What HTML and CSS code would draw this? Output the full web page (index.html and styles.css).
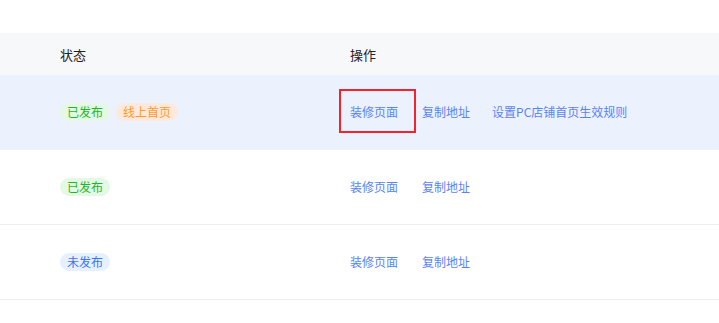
FILE: index.html
```html
<!DOCTYPE html>
<html lang="zh-CN">
<head>
<meta charset="utf-8">
<link rel="stylesheet" href="styles.css">
</head>
<body>
<div class="table">
  <div class="row head">
    <div class="cell col-status">状态</div>
    <div class="cell col-actions">操作</div>
  </div>
  <div class="row active">
    <div class="cell col-status">
      <span class="tag green">已发布</span>
      <span class="tag orange">线上首页</span>
    </div>
    <div class="cell col-actions">
      <a class="link marked">装修页面<span class="mark"></span></a>
      <a class="link">复制地址</a>
      <a class="link">设置PC店铺首页生效规则</a>
    </div>
  </div>
  <div class="row">
    <div class="cell col-status">
      <span class="tag green">已发布</span>
    </div>
    <div class="cell col-actions">
      <a class="link">装修页面</a>
      <a class="link">复制地址</a>
    </div>
  </div>
  <div class="row">
    <div class="cell col-status">
      <span class="tag blue">未发布</span>
    </div>
    <div class="cell col-actions">
      <a class="link">装修页面</a>
      <a class="link">复制地址</a>
    </div>
  </div>
</div>
</body>
</html>
```

FILE: styles.css
```css
html, body {
  margin: 0;
  padding: 0;
  background: #ffffff;
}
body {
  font-family: "Noto Sans CJK SC", "Noto Sans", sans-serif;
  color: #1f2329;
}
.table {
  padding-top: 33px;
}
.row {
  display: grid;
  grid-template-columns: 350px 1fr;
  align-items: center;
  height: 74px;
  border-bottom: 1px solid #eceef1;
}
.row.head {
  height: 42px;
  border-bottom: none;
  background: #f7f8fa;
  font-size: 13px;
  color: #1f2329;
}
.row.active {
  background: #ebf2fe;
  border-bottom-color: #ebf2fe;
}
.col-status {
  padding-left: 60px;
  display: flex;
  align-items: center;
  gap: 6px;
}
.col-actions {
  display: flex;
  align-items: center;
  gap: 22px;
}
.tag {
  display: inline-block;
  height: 18px;
  line-height: 18px;
  padding: 0 7px;
  border-radius: 9px;
  font-size: 12px;
}
.tag.green {
  color: #22b625;
  background: #e4f8e4;
}
.tag.orange {
  color: #ff9a2e;
  background: #ffe8dc;
}
.tag.blue {
  color: #3a76ee;
  background: #e7f0fe;
}
.link {
  font-size: 12px;
  line-height: 18px;
  color: #5b82f5;
  cursor: pointer;
}
.link:first-child {
  margin-right: 2px;
}
.marked {
  position: relative;
}
.mark {
  position: absolute;
  left: -11px;
  top: -14px;
  width: 77px;
  height: 44px;
  box-sizing: border-box;
  border: 2px solid #f5222d;
}
```
